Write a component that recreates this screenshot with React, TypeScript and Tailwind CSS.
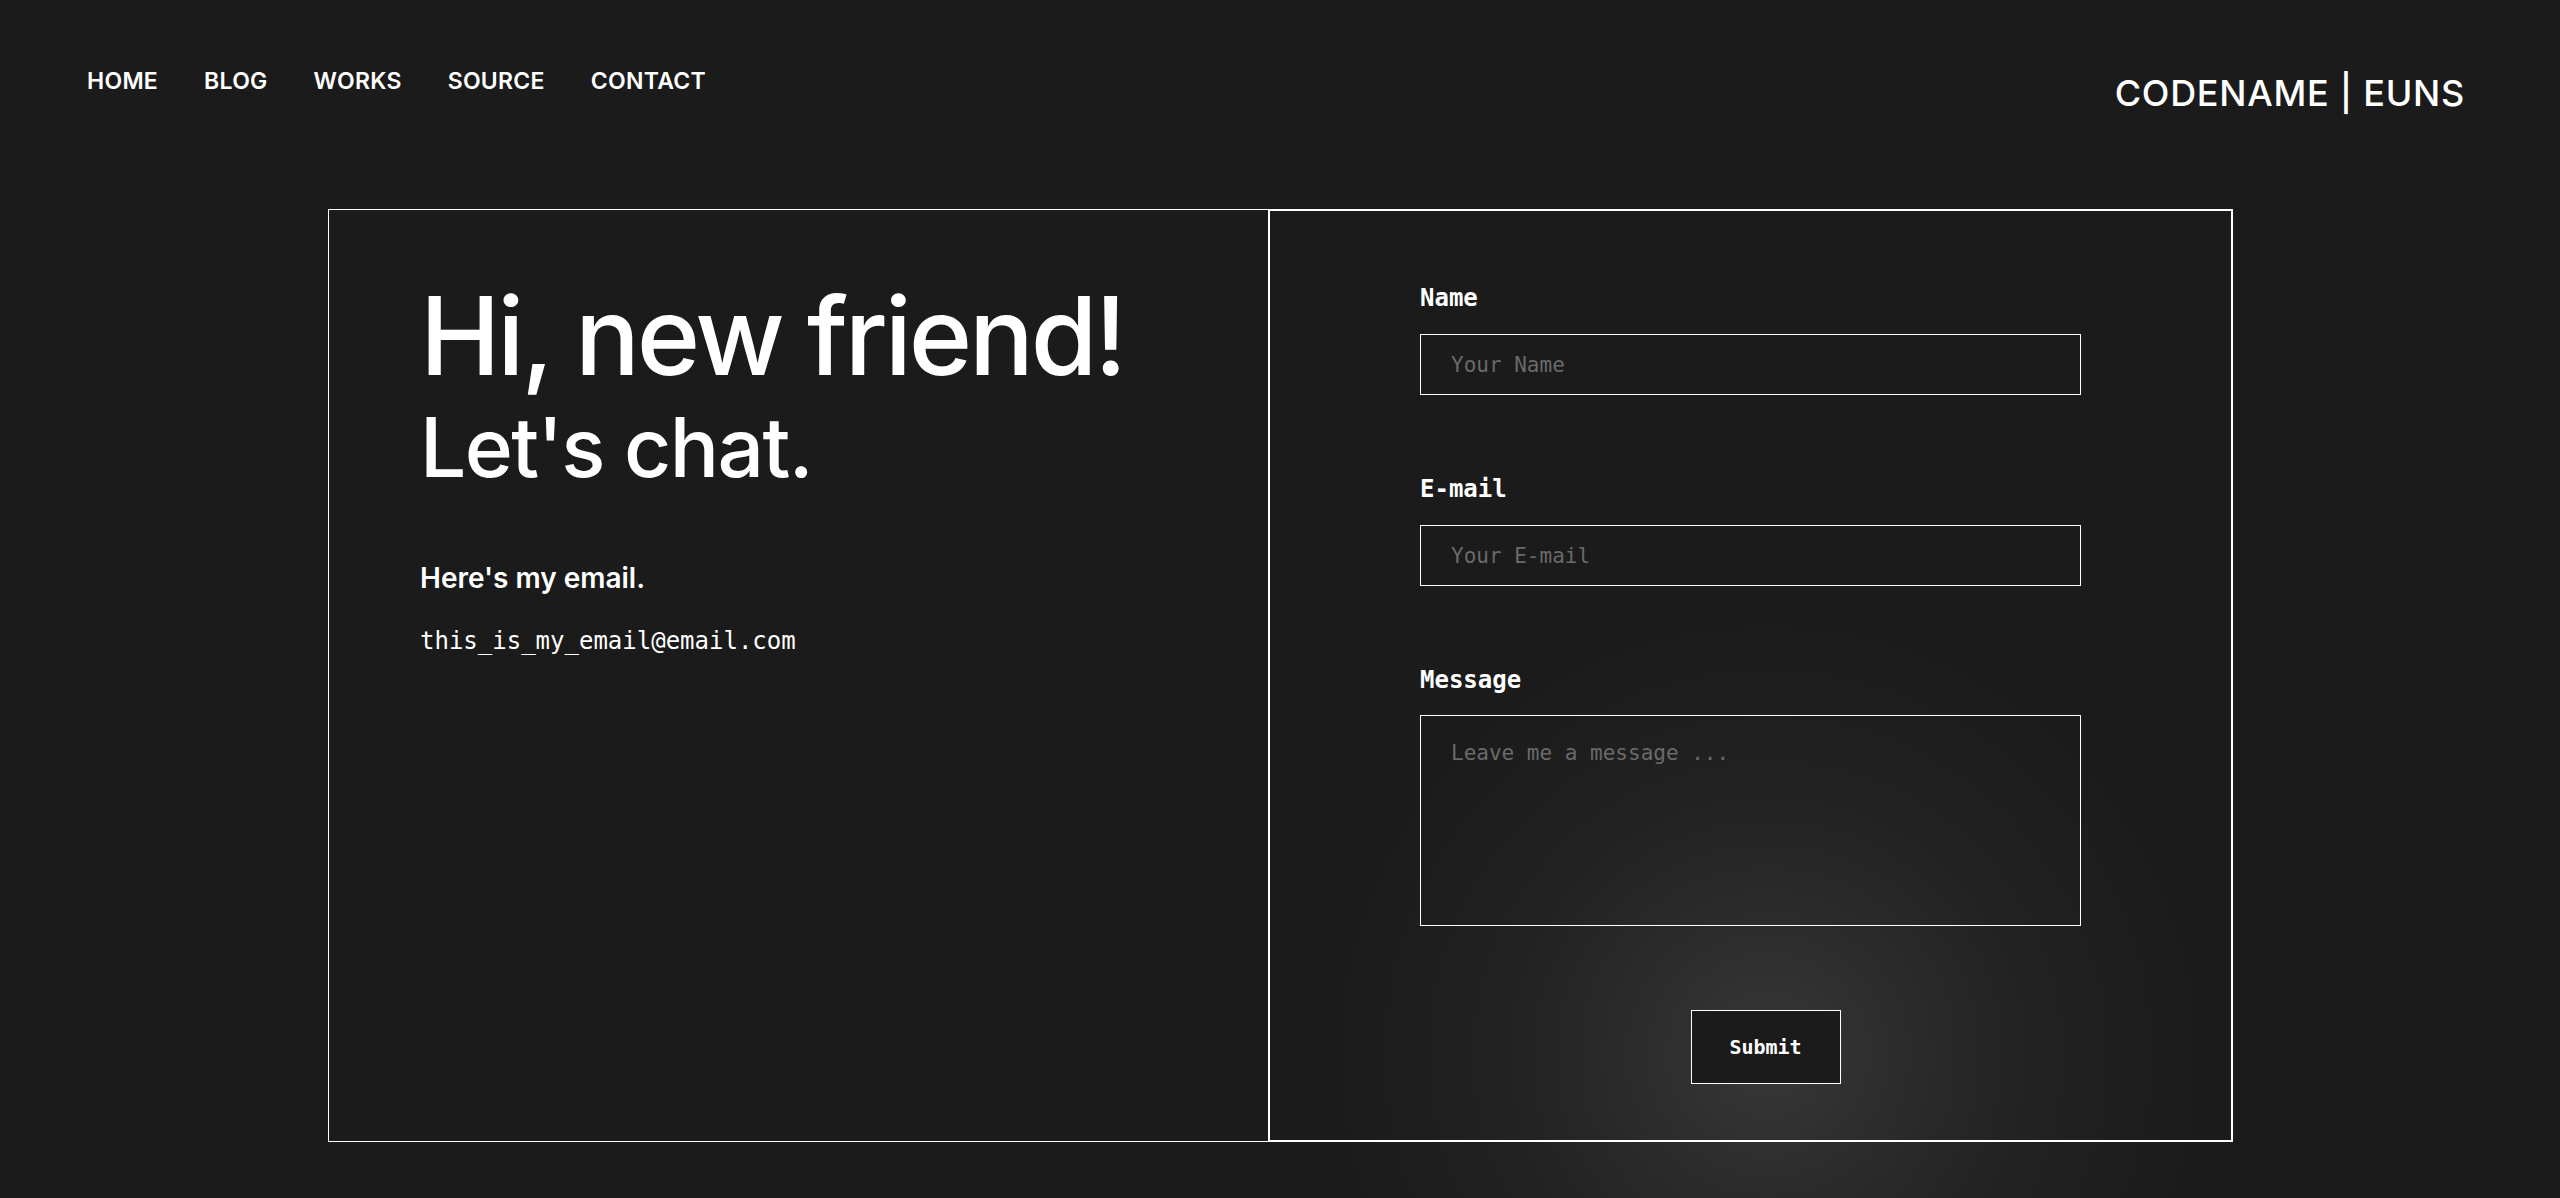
import { useState } from 'react'

const navItems = ['HOME', 'BLOG', 'WORKS', 'SOURCE', 'CONTACT']

const sans = "font-['Inter','Noto_Sans',sans-serif]"
const mono = "font-['DejaVu_Sans_Mono','Liberation_Mono',monospace]"

function Field({ label, placeholder, area }: { label: string; placeholder: string; area?: boolean }) {
    const [value, setValue] = useState('')
    return (
        <div className="flex flex-col">
            <label className={`${mono} text-[24px] leading-none font-bold text-white`}>{label}</label>
            {area ? (
                <textarea
                    value={value}
                    onChange={(e) => setValue(e.target.value)}
                    placeholder={placeholder}
                    className={`${mono} mt-[23px] h-[211px] w-full resize-none border border-white bg-transparent px-[30px] py-[22px] text-[21px] text-white outline-none placeholder:text-[#6a6a6a]`}
                />
            ) : (
                <input
                    value={value}
                    onChange={(e) => setValue(e.target.value)}
                    placeholder={placeholder}
                    className={`${mono} mt-[24px] h-[61px] w-full border border-white bg-transparent px-[30px] text-[21px] text-white outline-none placeholder:text-[#6a6a6a]`}
                />
            )}
        </div>
    )
}

export default function App() {
    return (
        <div className="relative min-h-screen overflow-hidden bg-[#1b1b1b] bg-[radial-gradient(circle_440px_at_1768px_1055px,#383838_0%,#2c2c2c_30%,#222_60%,#1b1b1b_100%)] text-white">
            <header className="flex items-start justify-between pl-[87px] pr-[95px] pt-[70px]">
                <nav className="flex gap-[46px]">
                    {navItems.map((item) => (
                        <a key={item} href="#" className={`${sans} text-[23px] leading-none font-semibold tracking-[0.012em] text-white`}>
                            {item}
                        </a>
                    ))}
                </nav>
                <div className={`${sans} mt-[5px] text-[36px] leading-none font-medium tracking-[0.02em] text-white`}>
                    CODENAME | EUNS
                </div>
            </header>

            <main className="mt-[98px] ml-[328px] flex h-[933px] w-[1905px]">
                <section className="w-[941px] border border-white pl-[91px] pt-[72px]">
                    <h1 className={`${sans} text-[108px] leading-none font-medium tracking-[-0.03em]`}>Hi, new friend!</h1>
                    <h2 className={`${sans} mt-[17px] text-[82px] leading-none font-medium tracking-[-0.02em]`}>Let's chat.</h2>
                    <p className={`${sans} mt-[75px] text-[28px] leading-none font-semibold`}>Here's my email.</p>
                    <p className={`${mono} mt-[37px] text-[24px] leading-none`}>this_is_my_email@email.com</p>
                </section>

                <section className="w-[964px] border-2 border-l border-white px-[150px] pt-[75px]">
                    <div className="flex flex-col gap-[82px]">
                        <Field label="Name" placeholder="Your Name" />
                        <Field label="E-mail" placeholder="Your E-mail" />
                        <Field label="Message" placeholder="Leave me a message ..." area />
                    </div>
                    <div className="mt-[84px] flex justify-center pl-[30px]">
                        <button className={`${mono} h-[74px] w-[150px] border border-white bg-[#1b1b1b] text-[20px] font-bold text-white`}>
                            Submit
                        </button>
                    </div>
                </section>
            </main>
        </div>
    )
}
